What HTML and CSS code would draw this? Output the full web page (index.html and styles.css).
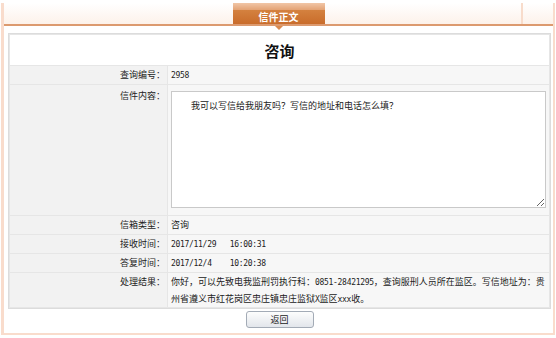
FILE: index.html
```html
<!DOCTYPE html>
<html lang="zh-CN">
  <head>
    <meta charset="UTF-8" />
    <title>信件正文</title>
    <link rel="stylesheet" href="styles.css">
  </head>
  <body>
    <div class="frame">
      <div class="hd">
        <div class="hd-side"></div>
        <div class="tab">信件正文</div>
        <div class="hd-side right"><span class="hd-mark"></span></div>
      </div>

      <div class="bd">
        <table class="letter">
          <tr>
            <th class="title" colspan="2">咨询</th>
          </tr>
          <tr>
            <td class="lbl">查询编号：</td>
            <td class="val"><span class="num">2958</span></td>
          </tr>
          <tr class="content-row">
            <td class="lbl">信件内容：</td>
            <td class="val">
              <textarea class="content" readonly>　　我可以写信给我朋友吗？写信的地址和电话怎么填？</textarea>
            </td>
          </tr>
          <tr>
            <td class="lbl">信箱类型：</td>
            <td class="val">咨询</td>
          </tr>
          <tr>
            <td class="lbl">接收时间：</td>
            <td class="val"><span class="num">2017/11/29&nbsp;&nbsp;&nbsp;16:00:31</span></td>
          </tr>
          <tr>
            <td class="lbl">答复时间：</td>
            <td class="val"><span class="num">2017/12/4&nbsp;&nbsp;&nbsp;&nbsp;10:20:38</span></td>
          </tr>
          <tr class="result-row">
            <td class="lbl">处理结果：</td>
            <td class="val">你好，可以先致电我监刑罚执行科：<span class="num">0851-28421295</span>，查询服刑人员所在监区。写信地址为：贵州省遵义市红花岗区忠庄镇忠庄监狱<span class="num">X</span>监区<span class="num">xxx</span>收。</td>
          </tr>
        </table>

        <div class="actions">
          <button class="btn" type="button">返回</button>
        </div>
      </div>
    </div>
  </body>
</html>
```

FILE: styles.css
```css
body {
  margin: 0;
  font-family: "Noto Sans CJK SC", sans-serif;
  font-size: 9px;
  color: #222;
  background: #fff;
}

.frame {
  margin: 3px 1px 0 1px;
  height: 332px;
  box-sizing: border-box;
  border-style: solid;
  border-color: #f9dccc;
  border-width: 0 2px 2px 3px;
}

/* header band with the tab */
.hd {
  display: flex;
  height: 21px;
  border-bottom: 2px solid #dc9a6f;
  background: linear-gradient(#ffffff, #fdf2ea);
}

.hd-side {
  flex: 1;
}

.hd-side.right {
  display: flex;
  justify-content: flex-end;
}

.hd-mark {
  width: 2px;
  margin-right: 30px;
  background: #f8dccb;
}

.tab {
  position: relative;
  width: 92px;
  box-sizing: border-box;
  padding-top: 7px;
  line-height: 14px;
  text-align: center;
  color: #fff;
  font-size: 10px;
  font-weight: bold;
  background: linear-gradient(#f1c6a7 0, #e3a274 7px, #d4813f 7px, #c96c2b 100%);
}

.tab::after {
  content: "";
  position: absolute;
  left: 50%;
  bottom: -6px;
  margin-left: -4px;
  border: 4px solid transparent;
  border-top-color: #d98a50;
  border-bottom: 0;
}

.bd {
  padding: 7px 2px 0 4px;
}

/* letter table */
.letter {
  width: 100%;
  border: 1px solid #dcdcdc;
  border-spacing: 1px;
  background: #e6e6e6;
}

.letter .title {
  height: 30px;
  padding: 0;
  background: #fff;
  color: #111;
  font-size: 15px;
  font-weight: bold;
}

.letter .lbl {
  width: 153px;
  padding: 3px 2px;
  line-height: 12px;
  text-align: right;
  vertical-align: top;
  background: #f2f2f2;
}

.letter .val {
  padding: 3px 3px;
  line-height: 12px;
  background: #f7f7f7;
  color: #222;
}

.content-row .lbl {
  padding-top: 5px;
}

.content-row .val {
  padding: 6px 3px 7px;
}

.result-row .val {
  padding: 0 3px;
  line-height: 17px;
}

.content {
  display: block;
  box-sizing: border-box;
  width: 375px;
  height: 117px;
  margin: 0;
  padding: 7px 1px;
  border: 1px solid #c9c9c9;
  font-family: "Noto Sans CJK SC", sans-serif;
  font-size: 9px;
  line-height: 13px;
  color: #222;
  background: #fff;
}

.num {
  font-family: "DejaVu Sans Mono", monospace;
  font-size: 8px;
  line-height: 1;
  letter-spacing: -0.3px;
}

.actions {
  padding-top: 2px;
  text-align: center;
}

.btn {
  width: 68px;
  height: 17px;
  padding: 0;
  border: 1px solid #a3abb6;
  border-radius: 3px;
  background: linear-gradient(#fdfdfd, #e2e6eb);
  font-family: "Noto Sans CJK SC", sans-serif;
  font-size: 9px;
  color: #222;
}
```
